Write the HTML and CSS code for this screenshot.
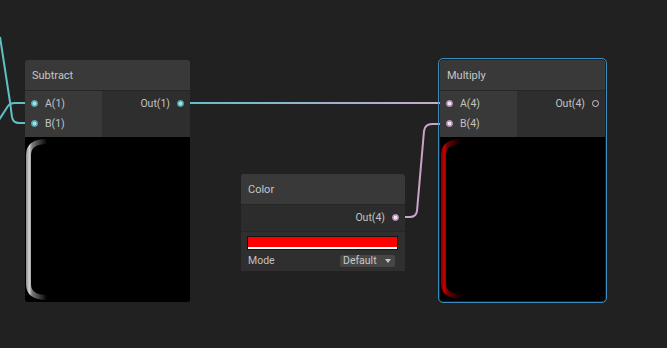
FILE: index.html
```html
<html lang="en">

<head>
  <meta charset="UTF-8">
  <meta name="viewport" content="width=device-width, initial-scale=1.0">
  <title>shader graph</title>
  <link rel="stylesheet" href="styles.css">
</head>

<body>
  <div class="graph">
    <svg class="wires" width="667" height="348">
      <defs>
        <linearGradient id="wire-out-a" gradientUnits="userSpaceOnUse" x1="180" y1="0" x2="450" y2="0">
          <stop offset="0" stop-color="#5fc0c4" />
          <stop offset="1" stop-color="#cfa8cf" />
        </linearGradient>
      </defs>
      <path class="wire teal" d="M0 37 L10 102 L12 117 Q13 123 19 123 H32" />
      <path class="wire teal" d="M-1 120 L8 106 Q10 103 15 103 H32" />
      <path class="wire" stroke="url(#wire-out-a)" d="M180 103 H450" />
      <path class="wire pink" d="M396 217 H410 Q416 217 417 211 L424 131 Q425 124 432 124 H450" />
    </svg>

    <!-- Subtract -->
    <div class="node node-subtract">
      <div class="node-title">Subtract</div>
      <div class="ports">
        <div class="inputs">
          <div class="port"><span class="dot teal"></span>A(1)</div>
          <div class="port"><span class="dot teal"></span>B(1)</div>
        </div>
        <div class="outputs">
          <div class="port">Out(1)<span class="dot teal"></span></div>
        </div>
      </div>
      <div class="preview">
        <svg width="165" height="165">
          <defs>
            <linearGradient id="edge-grey" gradientUnits="userSpaceOnUse" x1="0" y1="0" x2="22" y2="0">
              <stop offset="0" stop-color="#7c7c7c" />
              <stop offset="0.2" stop-color="#d2d2d2" />
              <stop offset="0.32" stop-color="#7a7a7a" />
              <stop offset="1" stop-color="#000" />
            </linearGradient>
          </defs>
          <path d="M22 4.5 Q3.5 4.5 3.5 18 V147 Q3.5 160.5 22 160.5" fill="none" stroke="url(#edge-grey)" stroke-width="5" />
        </svg>
      </div>
    </div>

    <!-- Color -->
    <div class="node node-color">
      <div class="node-title">Color</div>
      <div class="outputs single">
        <div class="port">Out(4)<span class="dot pink"></span></div>
      </div>
      <div class="props">
        <div class="swatch"></div>
        <div class="prop-row">
          <span class="prop-label">Mode</span>
          <div class="dropdown">Default<span class="caret"></span></div>
        </div>
      </div>
    </div>

    <!-- Multiply -->
    <div class="node node-multiply selected">
      <div class="node-title">Multiply</div>
      <div class="ports">
        <div class="inputs">
          <div class="port"><span class="dot pink"></span>A(4)</div>
          <div class="port"><span class="dot pink"></span>B(4)</div>
        </div>
        <div class="outputs">
          <div class="port">Out(4)<span class="dot empty"></span></div>
        </div>
      </div>
      <div class="preview short">
        <svg width="165" height="164">
          <defs>
            <linearGradient id="edge-red" gradientUnits="userSpaceOnUse" x1="0" y1="0" x2="22" y2="0">
              <stop offset="0" stop-color="#6a0000" />
              <stop offset="0.2" stop-color="#c40000" />
              <stop offset="0.32" stop-color="#6e0000" />
              <stop offset="1" stop-color="#000" />
            </linearGradient>
          </defs>
          <path d="M22 4.5 Q3.5 4.5 3.5 18 V146 Q3.5 159.5 22 159.5" fill="none" stroke="url(#edge-red)" stroke-width="5" />
        </svg>
      </div>
    </div>
  </div>
</body>

</html>
```

FILE: styles.css
```css
body {
  margin: 0;
  background: #212121;
  font-family: Roboto, "Liberation Sans", sans-serif;
  font-size: 10.5px;
  color: #c2c2c2;
}

.graph {
  position: relative;
  width: 667px;
  height: 348px;
  overflow: hidden;
}

.wires {
  position: absolute;
  left: 0;
  top: 0;
}

.wire {
  fill: none;
  stroke-width: 2;
}

.wire.teal {
  stroke: #5fc0c4;
}

.wire.pink {
  stroke: #c9a3c9;
}

/* nodes sit on the free canvas */
.node {
  position: absolute;
  display: flex;
  flex-direction: column;
  background: #2d2d2d;
  border-radius: 3px;
}

.node-subtract {
  left: 25px;
  top: 60px;
  width: 165px;
}

.node-multiply {
  left: 440px;
  top: 60px;
  width: 165px;
}

.node-color {
  left: 241px;
  top: 174px;
  width: 164px;
}

.node.selected {
  outline: 1px solid #3b8bbf;
  outline-offset: 1px;
}

.node-title {
  height: 30px;
  display: flex;
  align-items: center;
  padding-left: 7px;
  background: #393939;
  color: #c6c6c6;
  font-size: 11px;
  border-bottom: 1px solid #262626;
  border-radius: 3px 3px 0 0;
}

.ports {
  display: flex;
  height: 46px;
}

.inputs {
  width: 77px;
  background: #393939;
  padding-top: 2px;
}

.outputs {
  flex: 1;
  background: #2e2e2e;
  padding-top: 2px;
}

.outputs.single {
  flex: none;
  padding-bottom: 4px;
  background: #2c2c2c;
}

.port {
  height: 20px;
  display: flex;
  align-items: center;
  gap: 7px;
}

.inputs .port {
  padding-left: 6px;
}

.outputs .port {
  justify-content: flex-end;
  padding-right: 6px;
}

.dot {
  width: 7px;
  height: 7px;
  box-sizing: border-box;
  border-radius: 50%;
}

.dot.teal {
  border: 1px solid #5fc0c4;
  background: radial-gradient(circle, #a6e2e4 0 1.6px, #4fa9ad 2.2px);
}

.dot.pink {
  border: 1px solid #cda6cd;
  background: radial-gradient(circle, #f4e4f4 0 1.6px, #b58fb5 2.2px);
}

.dot.empty {
  border: 1px solid #d6c6d6;
  background: transparent;
}

.preview {
  height: 165px;
  background: #000;
  border-radius: 0 0 3px 3px;
}

.preview.short {
  height: 164px;
}

.preview svg {
  display: block;
}

.props {
  padding: 4px 7px 4px 6px;
  background: #2f2f2f;
  border-top: 1px solid #262626;
}

.swatch {
  height: 14px;
  box-sizing: border-box;
  border: 1px solid #141414;
  background: linear-gradient(to bottom, #ff0000 0 10px, #ffffff 10px);
}

.prop-row {
  margin-top: 4px;
  height: 13px;
  display: flex;
  align-items: center;
  justify-content: space-between;
}

.prop-label {
  padding-left: 1px;
}

.dropdown {
  width: 55px;
  height: 12px;
  box-sizing: border-box;
  margin-right: 3px;
  padding: 0 4px 0 3px;
  display: flex;
  align-items: center;
  justify-content: space-between;
  background: #464646;
  border-radius: 2px;
  color: #c8c8c8;
}

.caret {
  width: 0;
  height: 0;
  border-left: 3.5px solid transparent;
  border-right: 3.5px solid transparent;
  border-top: 4px solid #c8c8c8;
}
```
